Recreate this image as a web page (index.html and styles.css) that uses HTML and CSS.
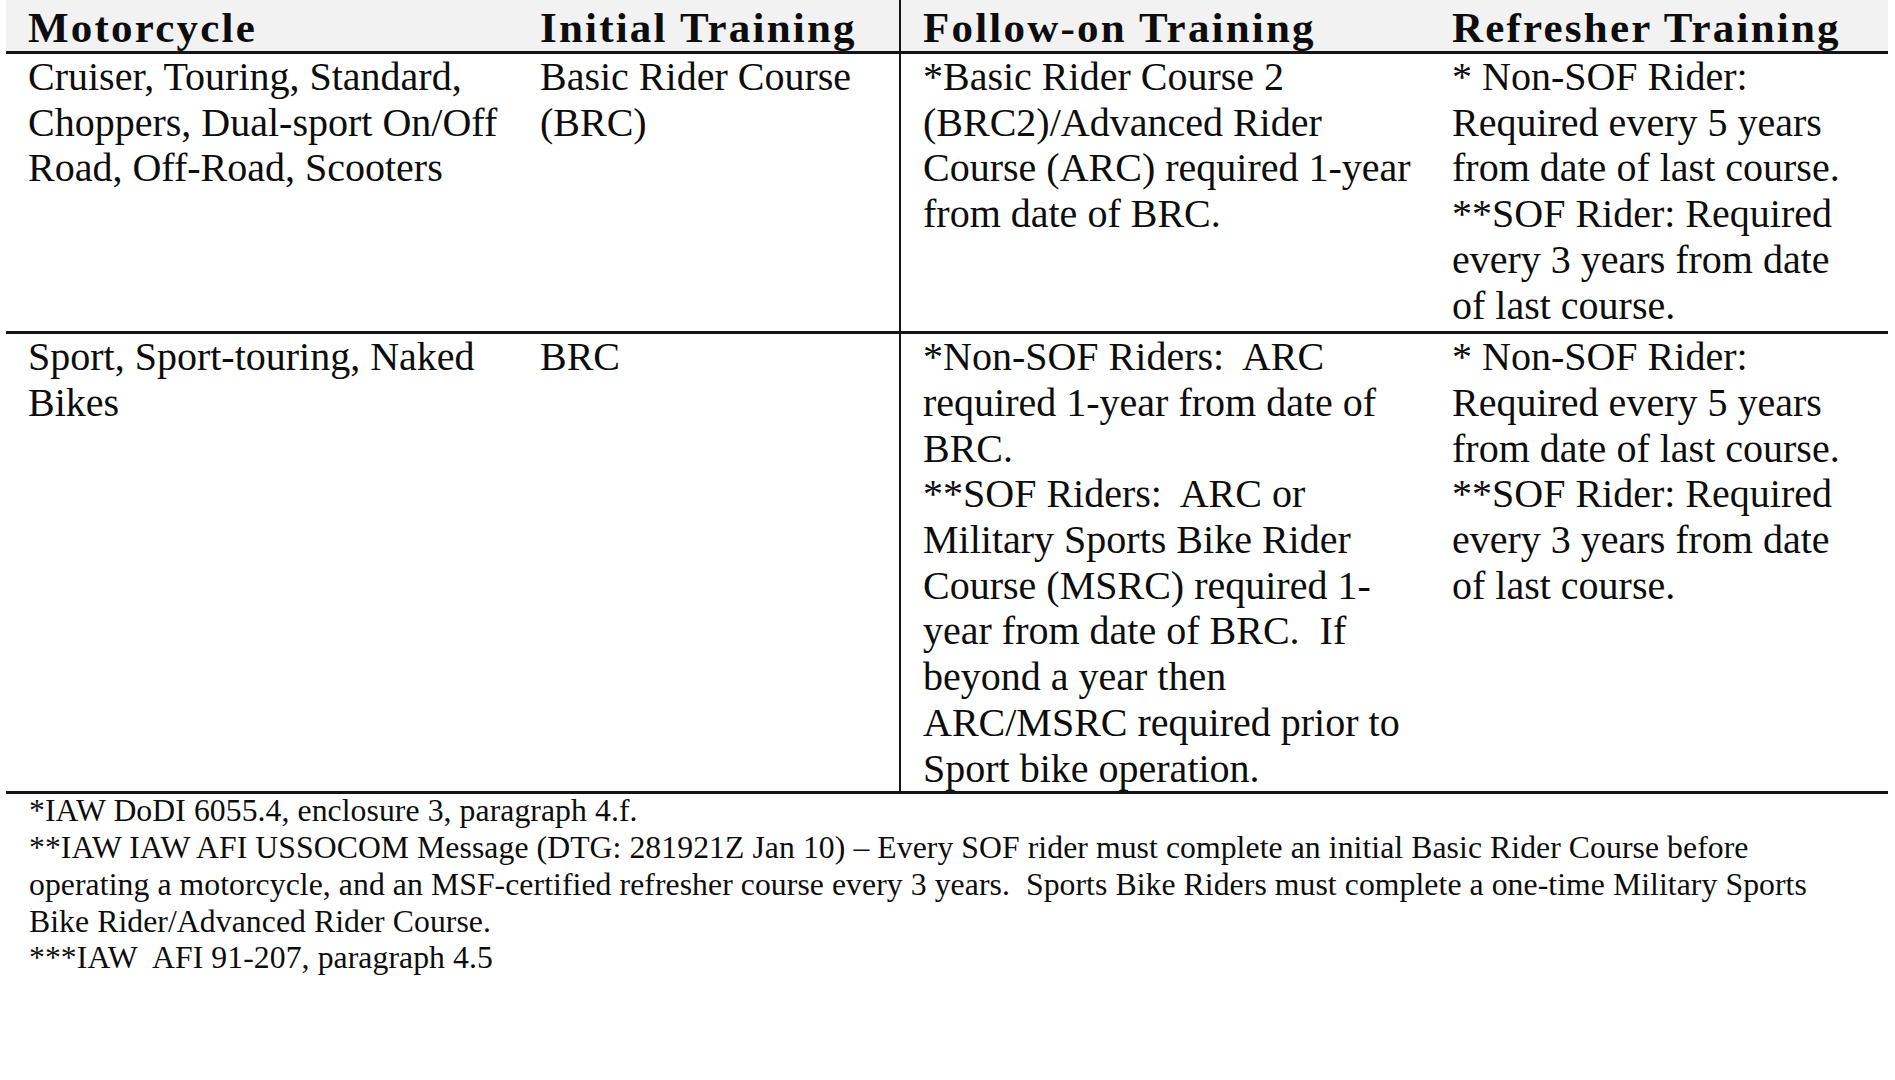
FILE: index.html
```html
<!DOCTYPE html>
<html lang="en">
<head>
<meta charset="utf-8">
<title>Motorcycle Training Requirements</title>
<link rel="stylesheet" href="styles.css">
</head>
<body>
<div class="sheet">
  <table class="req">
    <colgroup>
      <col class="c1"><col class="c2"><col class="c3"><col class="c4">
    </colgroup>
    <thead>
      <tr>
        <th>Motorcycle</th>
        <th>Initial Training</th>
        <th class="split">Follow-on Training</th>
        <th>Refresher Training</th>
      </tr>
    </thead>
    <tbody>
      <tr class="r1">
        <td>Cruiser, Touring, Standard,<br>Choppers, Dual-sport On/Off<br>Road, Off-Road, Scooters</td>
        <td>Basic Rider Course<br>(BRC)</td>
        <td class="split">*Basic Rider Course 2<br>(BRC2)/Advanced Rider<br>Course (ARC) required 1-year<br>from date of BRC.</td>
        <td>* Non-SOF Rider:<br>Required every 5 years<br>from date of last course.<br>**SOF Rider: Required<br>every 3 years from date<br>of last course.</td>
      </tr>
      <tr class="r2">
        <td>Sport, Sport-touring, Naked<br>Bikes</td>
        <td>BRC</td>
        <td class="split">*Non-SOF Riders:&nbsp; ARC<br>required 1-year from date of<br>BRC.<br>**SOF Riders:&nbsp; ARC or<br>Military Sports Bike Rider<br>Course (MSRC) required 1-<br>year from date of BRC.&nbsp; If<br>beyond a year then<br>ARC/MSRC required prior to<br>Sport bike operation.</td>
        <td>* Non-SOF Rider:<br>Required every 5 years<br>from date of last course.<br>**SOF Rider: Required<br>every 3 years from date<br>of last course.</td>
      </tr>
    </tbody>
  </table>
  <div class="notes">
    <p>*IAW DoDI 6055.4, enclosure 3, paragraph 4.f.</p>
    <p>**IAW IAW AFI USSOCOM Message (DTG: 281921Z Jan 10) – Every SOF rider must complete an initial Basic Rider Course before<br>operating a motorcycle, and an MSF-certified refresher course every 3 years.&nbsp; Sports Bike Riders must complete a one-time Military Sports<br>Bike Rider/Advanced Rider Course.</p>
    <p>***IAW&nbsp; AFI 91-207, paragraph 4.5</p>
  </div>
</div>
</body>
</html>
```

FILE: styles.css
```css
html, body {
  margin: 0;
  padding: 0;
  background: #ffffff;
}

body {
  font-family: "Liberation Serif", "Times New Roman", serif;
  color: #0d0d0d;
}

.sheet {
  width: 1895px;
  height: 1080px;
  padding-left: 6px;
  box-sizing: border-box;
  overflow: hidden;
}

.req {
  width: 1882px;
  table-layout: fixed;
  border-collapse: collapse;
  border-spacing: 0;
}

.c1 { width: 512px; }
.c2 { width: 382px; }
.c3 { width: 530px; }
.c4 { width: 458px; }

.req th {
  background: #f2f2f2;
  font-size: 43px;
  font-weight: bold;
  letter-spacing: 2.2px;
  line-height: 46px;
  text-align: left;
  padding: 5px 0 0 22px;
  border-bottom: 3px solid #151515;
  white-space: nowrap;
  vertical-align: bottom;
}

.req td {
  font-size: 40px;
  line-height: 45.7px;
  padding: 0 0 0 22px;
  vertical-align: top;
  white-space: nowrap;
  border-bottom: 3px solid #151515;
}

.req .r1 td {
  padding-bottom: 3px;
}

.req .split {
  border-left: 2px solid #151515;
}

.notes {
  padding-left: 23px;
  font-size: 31.7px;
  letter-spacing: 0.08px;
  line-height: 36.8px;
  margin-top: -1px;
}

.notes p {
  margin: 0;
  white-space: nowrap;
}
```
